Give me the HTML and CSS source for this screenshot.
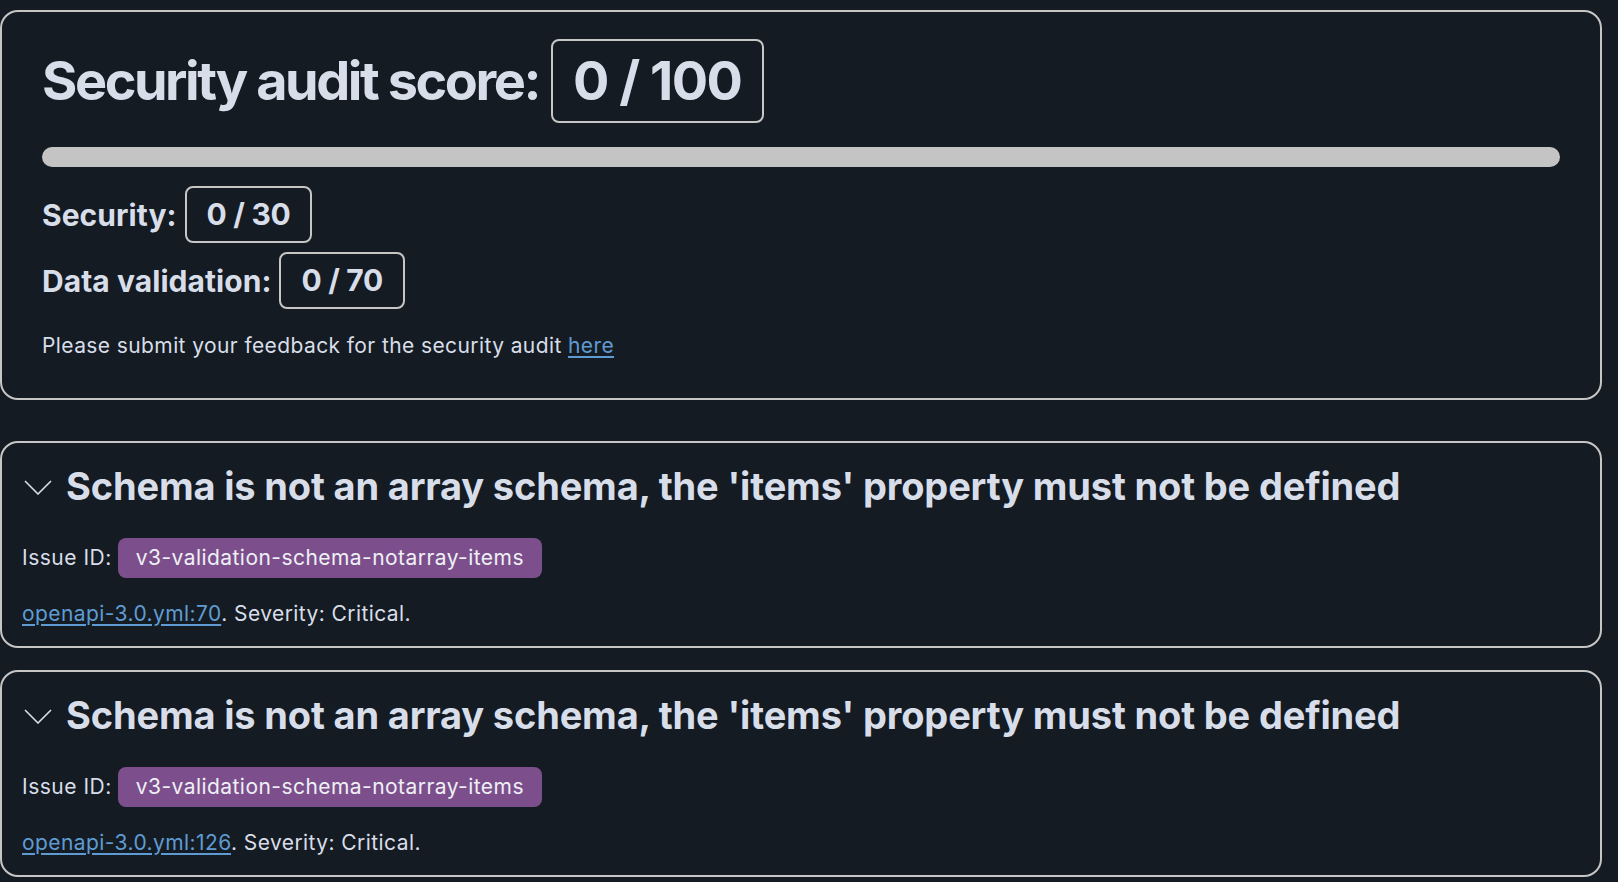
FILE: index.html
```html
<!DOCTYPE html>
<html lang="en">
<head>
<meta charset="utf-8">
<title>Security audit</title>
<link rel="stylesheet" href="styles.css">
</head>
<body>
<div class="page">
  <section class="card summary">
    <div class="score-row">
      <h1 class="score-title">Security audit score:</h1>
      <span class="score-box score-box-lg">0 / 100</span>
    </div>
    <div class="progress"><div class="progress-fill" style="width:0%"></div></div>
    <div class="sub-row">
      <span class="sub-label">Security:</span>
      <span class="score-box score-box-sm">0 / 30</span>
    </div>
    <div class="sub-row sub-row-2">
      <span class="sub-label">Data validation:</span>
      <span class="score-box score-box-sm">0 / 70</span>
    </div>
    <p class="feedback">Please submit your feedback for the security audit <a href="#" class="link">here</a></p>
  </section>

  <section class="card issue">
    <div class="issue-head">
      <svg class="chevron" width="28" height="15" viewBox="0 0 28 15"><polyline points="1,1 14,14 27,1" fill="none" stroke="#d8dee9" stroke-width="1.6"/></svg>
      <h2 class="issue-title">Schema is not an array schema, the 'items' property must not be defined</h2>
    </div>
    <div class="issue-id-row">
      <span class="issue-id-label">Issue ID:</span>
      <span class="badge">v3-validation-schema-notarray-items</span>
    </div>
    <p class="issue-loc"><a href="#" class="link">openapi-3.0.yml:70</a>. Severity: Critical.</p>
  </section>

  <section class="card issue">
    <div class="issue-head">
      <svg class="chevron" width="28" height="15" viewBox="0 0 28 15"><polyline points="1,1 14,14 27,1" fill="none" stroke="#d8dee9" stroke-width="1.6"/></svg>
      <h2 class="issue-title">Schema is not an array schema, the 'items' property must not be defined</h2>
    </div>
    <div class="issue-id-row">
      <span class="issue-id-label">Issue ID:</span>
      <span class="badge">v3-validation-schema-notarray-items</span>
    </div>
    <p class="issue-loc"><a href="#" class="link">openapi-3.0.yml:126</a>. Severity: Critical.</p>
  </section>
</div>
</body>
</html>
```
FILE: styles.css
```css
* { box-sizing: border-box; }
html, body {
  margin: 0;
  padding: 0;
  background: #151b22;
}
body {
  font-family: Inter, "Noto Sans", "Liberation Sans", sans-serif;
  color: #d8dee9;
  font-size: 21px;
  line-height: 24px;
  overflow: hidden;
}
.page {
  width: 1602px;
  padding-top: 10px;
  display: flex;
  flex-direction: column;
}
.card {
  border: 2px solid #c6c6c6;
  border-radius: 18px;
}
.summary {
  padding: 27px 40px 40px 40px;
}
.score-row {
  display: flex;
  align-items: center;
  gap: 12px;
}
.score-title {
  margin: 0;
  font-size: 54px;
  line-height: 84px;
  font-weight: 700;
  letter-spacing: -2.45px;
}
.score-box {
  border: 2px solid #c6c6c6;
  border-radius: 8px;
  font-weight: 700;
}
.score-box-lg {
  font-size: 54px;
  line-height: 80px;
  height: 84px;
  padding: 0 20px;
  letter-spacing: -1.5px;
}
.progress {
  margin-top: 24px;
  height: 20px;
  border-radius: 10px;
  background: #c4c4c4;
  overflow: hidden;
}
.progress-fill {
  height: 100%;
  background: #4caf50;
}
.sub-row {
  margin-top: 19px;
  display: flex;
  align-items: center;
  gap: 8px;
}
.sub-row-2 { margin-top: 9px; }
.sub-label {
  font-size: 30px;
  font-weight: 700;
  letter-spacing: 0.05px;
}
.score-box-sm {
  font-size: 30px;
  line-height: 53px;
  height: 57px;
  padding: 0 20px;
  letter-spacing: -0.3px;
}
.feedback {
  margin: 25px 0 0 0;
  letter-spacing: 0.4px;
}
.link {
  color: #5f9bd3;
  text-decoration: underline;
  text-underline-offset: 3px;
}
.issue {
  margin-top: 41px;
  padding: 20px 20px 20px 20px;
}
.issue + .issue { margin-top: 22px; }
.issue-head {
  display: flex;
  align-items: center;
  gap: 14px;
  padding-left: 2px;
}
.chevron { flex: none; margin-top: 2px; }
.issue-title {
  margin: 0;
  font-size: 38px;
  line-height: 46px;
  font-weight: 700;
  letter-spacing: -0.16px;
}
.issue-id-row {
  margin-top: 29px;
  display: flex;
  align-items: center;
  gap: 6px;
}
.badge {
  background: #7c4f8c;
  color: #eef0f5;
  border-radius: 8px;
  height: 40px;
  line-height: 40px;
  padding: 0 18px;
  letter-spacing: 0.45px;
}
.issue-id-label { letter-spacing: 0.5px; }
.issue-loc {
  margin: 24px 0 0 0;
  letter-spacing: 0.42px;
}
```
